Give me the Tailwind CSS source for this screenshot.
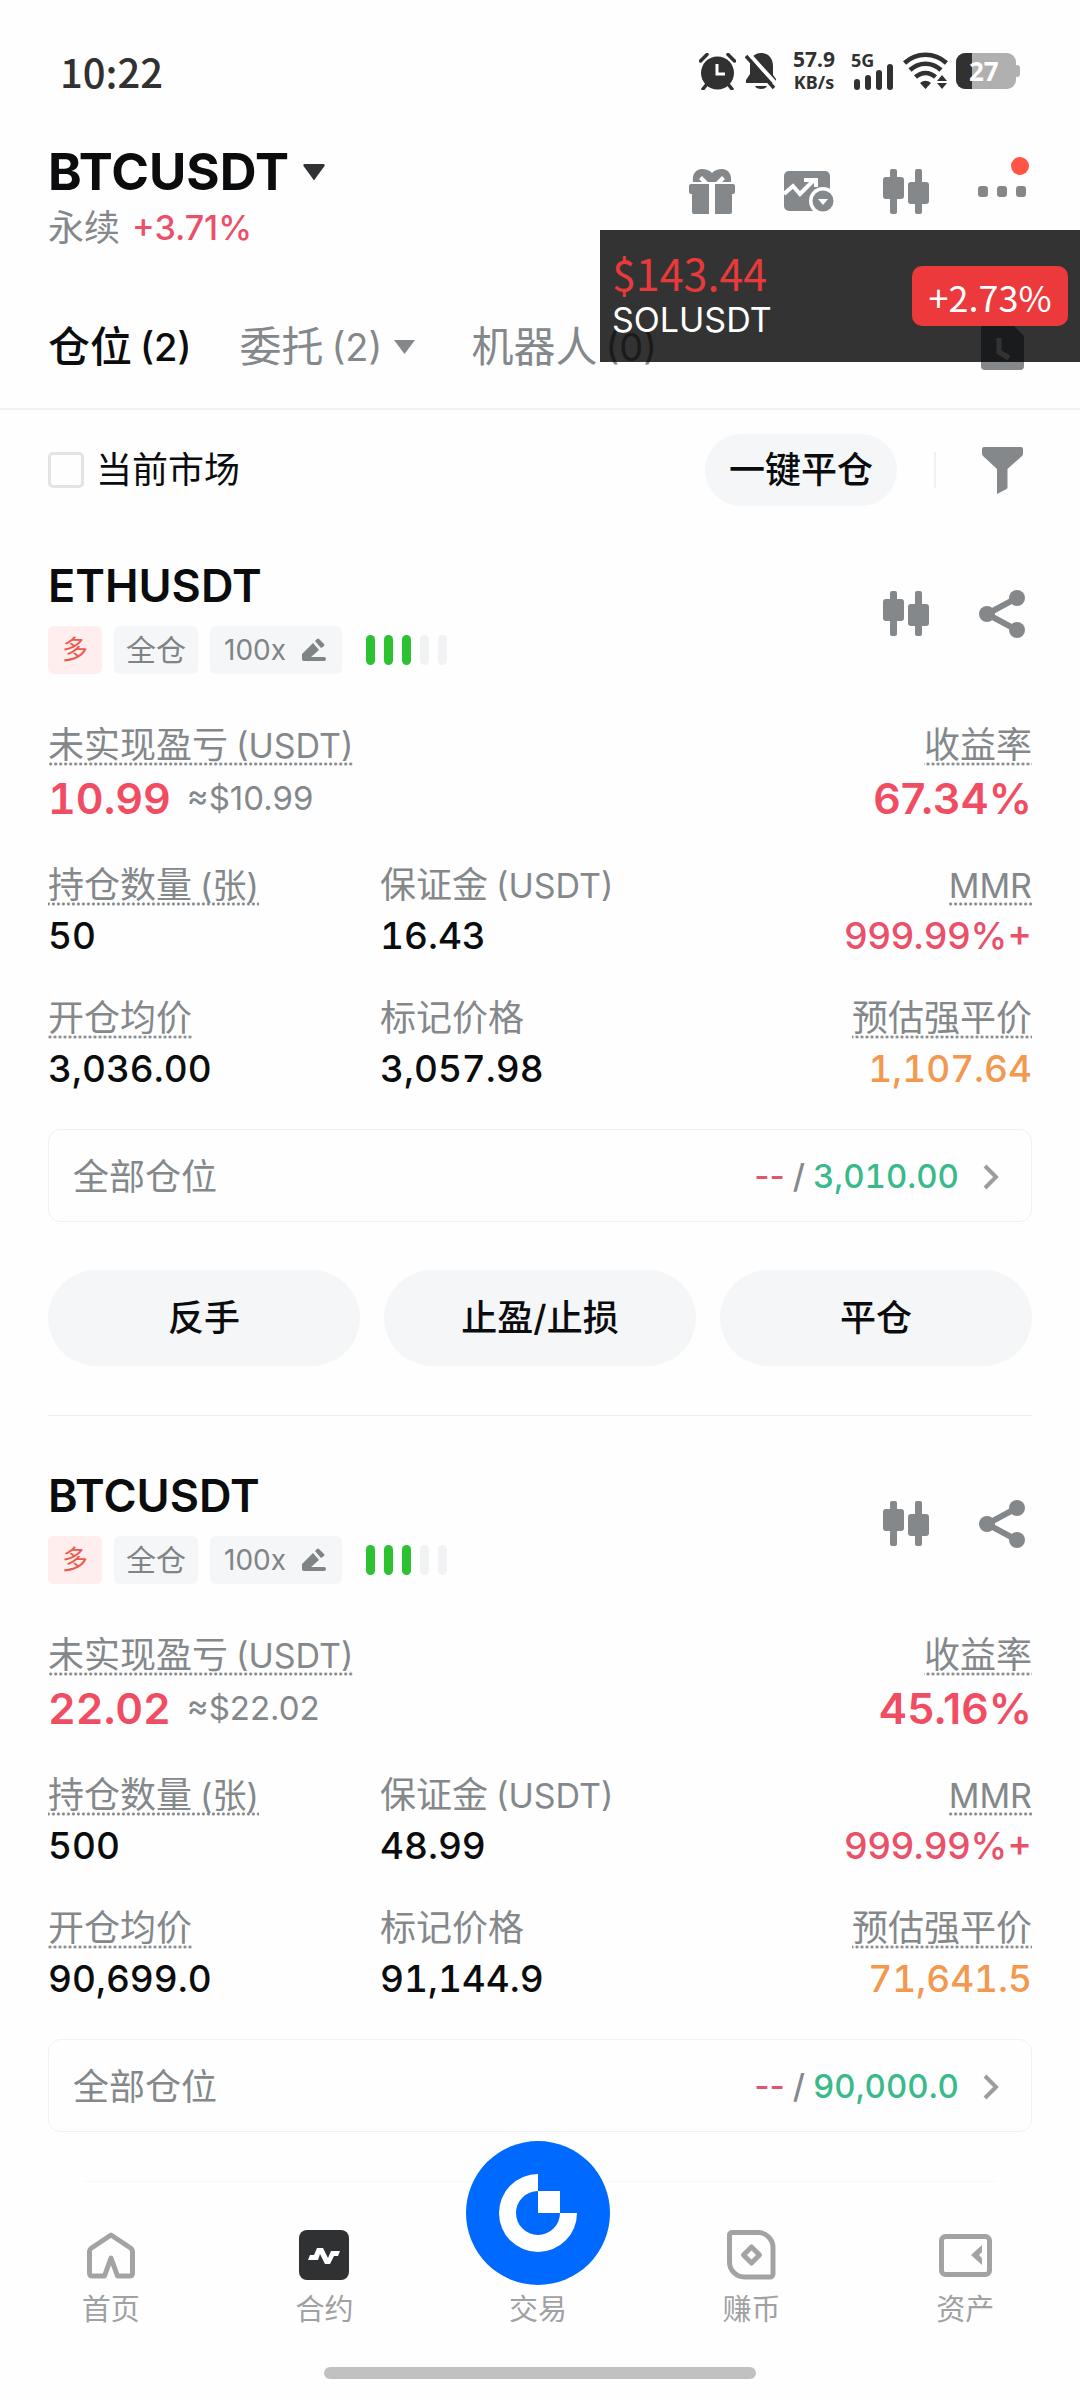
<!DOCTYPE html>
<html lang="zh-CN">
<head>
<meta charset="utf-8">
<meta name="viewport" content="width=device-width, initial-scale=1">
<title>BTCUSDT 永续</title>
<script src="https://cdn.jsdelivr.net/npm/@tailwindcss/browser@4"></script>
</head>
<body class="bg-[#fefefe] font-[Inter,'Noto_Sans_CJK_SC',sans-serif] text-[#0b0c0d]">
<svg class="hidden" aria-hidden="true">
  <symbol id="candles" viewBox="0 0 46 46"><g fill="#84888b"><rect x="7" y="0" width="7" height="45" rx="2"/><rect x="0" y="8" width="21" height="22" rx="3"/><rect x="32" y="0" width="7" height="45" rx="2"/><rect x="25" y="13" width="21" height="22" rx="3"/></g></symbol>
  <symbol id="share" viewBox="0 0 46 48"><path d="M38 8 8 24l30 16" fill="none" stroke="#84888b" stroke-width="6"/><g fill="#84888b"><circle cx="38" cy="8" r="8"/><circle cx="8" cy="24" r="8"/><circle cx="38" cy="40" r="8"/></g></symbol>
  <symbol id="pencil" viewBox="0 0 24 24"><g fill="#7f8487"><path d="M0 21v-5L11 5l6 7-8 7h13a1.500 1.500 0 0 1 0 4H2a2 2 0 0 1-2-2z"/><path d="m13 3 2-2a1.500 1.500 0 0 1 2 0l5 5a1.500 1.500 0 0 1 0 2l-3 2z"/></g></symbol>
  <symbol id="chevron" viewBox="0 0 16 26"><path d="m2 2 11 11L2 24" fill="none" stroke="#9b9da0" stroke-width="4"/></symbol>
</svg>

<div class="relative flex min-h-screen flex-col">

  <!-- Status bar -->
  <div class="flex h-[142px] items-center justify-between pr-[60px] pl-[60px] text-[#313131]">
    <time class="font-['Noto_Sans_CJK_SC',sans-serif] text-[40px] leading-[48px] font-medium">10:22</time>
    <div class="flex items-center font-['Noto_Sans','Noto_Sans_CJK_SC',sans-serif] font-bold">
      <svg class="h-[37px] w-[37px]" viewBox="0 0 37 37" aria-label="闹钟"><circle cx="18.500" cy="20" r="16.500" fill="#313131"/><path d="M1.500 8 8 1.500M35.500 8 29 1.500M8 31l-4 5M29 31l4 5" stroke="#313131" stroke-width="3.500" stroke-linecap="round"/><path d="M18 11v10h8" fill="none" stroke="#fff" stroke-width="3"/></svg>
      <svg class="ml-2 h-[38px] w-[33px]" viewBox="0 0 33 38" aria-label="静音"><path d="M17 1c8 0 12 6 12 13v9l3 4v4H2v-3l4-6v-9C6 6 10 1 17 1z" fill="#313131"/><path d="M11 34h12c-1 2-3 3-6 3s-5-1-6-3z" fill="#313131"/><path d="M4 1 33 33" stroke="#fff" stroke-width="4"/><path d="m2 4 28 32" stroke="#313131" stroke-width="3.500"/></svg>
      <div class="ml-4 flex flex-col items-center leading-[23px]"><span class="text-[21px]">57.9</span><span class="text-[18px]">KB/s</span></div>
      <div class="relative ml-4 h-[38px] w-[44px]"><span class="absolute top-0 left-0 text-[18px] leading-4">5G</span>
        <svg class="h-full w-full" viewBox="0 0 44 38"><g fill="#313131"><rect x="3" y="27" width="6" height="11" rx="3"/><rect x="14" y="23" width="6" height="15" rx="3"/><rect x="25" y="18" width="6" height="20" rx="3"/><rect x="36" y="12" width="6" height="26" rx="3"/></g></svg></div>
      <svg class="ml-2 h-[38px] w-[45px]" viewBox="0 0 45 38" aria-label="Wi-Fi"><g fill="none" stroke="#313131" stroke-width="4.500"><path d="M1.500 11c12-11 30-11 42 0"/><path d="M7 18c9-8.500 22-8.500 31 0"/><path d="M12.500 25c6-5.500 14-5.500 20 0"/></g><path d="M17 31c4-3 7-3 11 0l-5.500 6z" fill="#313131"/><path d="m34 29 5-6 5 6zM34 31h10l-5 6z" fill="#313131"/></svg>
      <div class="relative ml-2 h-[36px] w-[64px]"><svg class="h-full w-full" viewBox="0 0 64 36"><rect x="58" y="12" width="6" height="12" rx="3" fill="#b0b0b0"/><rect width="60" height="36" rx="9" fill="#b0b0b0"/><path d="M9 0h7v36H9a9 9 0 0 1-9-9V9a9 9 0 0 1 9-9z" fill="#313131"/></svg><span class="absolute inset-0 flex items-center pl-[13px] text-[26px] text-white">27</span></div>
    </div>
  </div>

  <!-- Instrument header -->
  <header class="flex h-[112px] justify-between px-12">
    <div class="pt-0.5">
      <h1><button class="flex items-center gap-[14px] text-[51px] leading-[56px] font-bold">BTCUSDT
        <svg class="h-4 w-[22px]" viewBox="0 0 22 16"><path d="M1.500 0h19c1 0 1.500 1 1 2L12 15a1 1 0 0 1-2 0L.500 2C0 1 .500 0 1.500 0z" fill="#303235"/></svg></button></h1>
      <p class="flex items-center gap-3 text-[36px] leading-[56px] text-[#84888b]">永续<span class="text-[34px] font-medium text-[#ea5068]">+3.71%</span></p>
    </div>
    <div class="flex h-[100px] items-center gap-[49px]">
      <button aria-label="礼物"><svg class="block h-[46px] w-[46px]" viewBox="0 0 46 46"><g fill="#84888b"><path d="M2 15h18v30H5a2 2 0 0 1-2-2V25H2a2 2 0 0 1-2-2v-6a2 2 0 0 1 2-2zM26 15h18a2 2 0 0 1 2 2v6a2 2 0 0 1-2 2h-1v18a2 2 0 0 1-2 2H26z"/><path d="M4 13C3 5 7 0 13 0c4 0 7 1 10 4 3-3 6-4 10-4 6 0 10 5 9 13h-9l3-3-3-3-6 6h-8l-6-6-3 3 3 3z"/></g></svg></button>
      <button aria-label="行情"><svg class="block h-[44px] w-[50px]" viewBox="0 0 50 44"><rect y="1" width="46" height="40" rx="5" fill="#84888b"/><path d="m0 24 9-8 7 8L29 11M20 10h12v7" fill="none" stroke="#fff" stroke-width="4"/><circle cx="39" cy="31" r="14" fill="#fff"/><circle cx="39" cy="31" r="10.500" fill="#84888b"/><path d="M34 29h10l-5 6z" fill="#fff"/></svg></button>
      <button aria-label="K线"><svg class="block h-[46px] w-[46px]"><use href="#candles"/></svg></button>
      <button class="relative mr-[6px]" aria-label="更多"><svg class="block h-[46px] w-12" viewBox="0 0 48 46"><g fill="#84888b"><rect y="17" width="10" height="11" rx="3"/><rect x="19" y="17" width="10" height="11" rx="3"/><rect x="38" y="17" width="10" height="11" rx="3"/></g></svg><span class="absolute -top-3 -right-[3px] h-[18px] w-[18px] rounded-full bg-[#ff5546]"></span></button>
    </div>
  </header>

  <!-- Tabs -->
  <div class="flex h-[156px] items-center justify-between border-b-2 border-[#f1f1f1] pt-8 pr-14 pl-12 text-[42px] leading-[56px] text-[#84888b]">
    <div class="flex items-center">
      <button class="flex items-center gap-2 font-medium text-[#0b0c0d]">仓位<span class="text-[38px]">(2)</span></button>
      <button class="ml-12 flex items-center gap-2">委托<span class="text-[38px]">(2)</span><svg class="ml-1 h-[14px] w-[21px]" viewBox="0 0 21 14"><path d="M0 0h21L10.500 14z" fill="#84888b"/></svg></button>
      <button class="ml-14 flex items-center gap-2">机器人<span class="text-[38px]">(0)</span></button>
    </div>
    <button aria-label="历史"><svg class="block h-[46px] w-[43px]" viewBox="0 0 43 46"><path d="M4 0h27l12 12v30a4 4 0 0 1-4 4H4a4 4 0 0 1-4-4V4a4 4 0 0 1 4-4z" fill="#84888b"/><path d="M18 14v14l10 6" fill="none" stroke="#fff" stroke-width="5"/></svg></button>
  </div>

  <!-- Price ticker floating above the page -->
  <aside class="absolute top-[230px] right-0 z-10 flex h-[132px] w-[480px] items-center justify-between bg-black/80 pr-3 pl-3">
    <div><p class="font-['Noto_Sans_CJK_SC',sans-serif] text-[43px] leading-[48px] text-[#e8393b]">$143.44</p><p class="text-[34px] leading-[48px] text-white">SOLUSDT</p></div>
    <span class="flex h-[60px] w-[156px] items-center justify-center rounded-[10px] bg-[#eb393c] font-['Noto_Sans_CJK_SC',sans-serif] text-[36px] text-white">+2.73%</span>
  </aside>

  <main class="px-12">
    <div class="flex items-center justify-between pt-6 pr-[9px]">
      <label class="flex items-center gap-3 text-[36px]"><input type="checkbox" class="h-9 w-9 appearance-none rounded-[5px] border-3 border-[#e2e3e3]">当前市场</label>
      <div class="flex items-center">
        <button class="h-[72px] rounded-full bg-[#f4f6f8] px-6 text-[36px] font-medium">一键平仓</button>
        <span class="mr-[46px] ml-[37px] h-9 w-[2px] bg-[#f0f1f1]"></span>
        <button aria-label="筛选"><svg class="block h-[47px] w-[41px]" viewBox="0 0 41 47"><path d="M2 0h37a2 2 0 0 1 2 2v5a3 3 0 0 1-1 2L25.500 22v18a2 2 0 0 1-1 2L15 47V22L1 9a3 3 0 0 1-1-2V2a2 2 0 0 1 2-2z" fill="#84888b"/></svg></button>
      </div>
    </div>

    <!-- ETHUSDT position -->
    <section class="border-b border-[#ececec] pt-[52px] pb-[49px]">
      <div class="flex justify-between">
        <div>
          <h2 class="text-[45px] leading-[56px] font-semibold">ETHUSDT</h2>
          <div class="mt-3 flex items-center gap-3 leading-[48px] text-[#7f8487]">
            <span class="rounded-md bg-[#ffeeed] px-[14px] text-[26px] text-[#ec5a4d]">多</span>
            <span class="rounded-md bg-[#f4f6f8] px-3 text-[30px]">全仓</span>
            <button class="flex items-center gap-4 rounded-md bg-[#f4f6f8] pr-4 pl-[14px] text-[28px]">100x<svg class="h-6 w-6"><use href="#pencil"/></svg></button>
            <div class="ml-3 flex gap-[9px]"><i class="h-[30px] w-[9px] rounded-full bg-[#2dc232]"></i><i class="h-[30px] w-[9px] rounded-full bg-[#2dc232]"></i><i class="h-[30px] w-[9px] rounded-full bg-[#2dc232]"></i><i class="h-[30px] w-[9px] rounded-full bg-[#f1f2f3]"></i><i class="h-[30px] w-[9px] rounded-full bg-[#f1f2f3]"></i></div>
          </div>
        </div>
        <div class="flex h-[112px] items-center gap-[50px] pr-[7px]">
          <button aria-label="K线"><svg class="block h-[46px] w-[46px]"><use href="#candles"/></svg></button>
          <button aria-label="分享"><svg class="block h-12 w-[46px]"><use href="#share"/></svg></button>
        </div>
      </div>
      <dl class="mt-12 flex justify-between text-[36px] text-[#84888b]">
        <div>
          <dt class="flex h-11 w-fit items-center gap-2 bg-[radial-gradient(circle,#84888b_1px,transparent_2px)] bg-[length:5px_4px] bg-bottom bg-repeat-x pt-0.5">未实现盈亏<span class="text-[34px]">(USDT)</span></dt>
          <dd class="mt-2 flex items-center gap-4 text-[43px] leading-[48px] font-semibold text-[#f04d63] tabular-nums">10.99<span class="text-[33px] font-normal text-[#84888b] proportional-nums">≈$10.99</span></dd>
        </div>
        <div class="flex flex-col items-end">
          <dt class="flex h-11 items-center bg-[radial-gradient(circle,#84888b_1px,transparent_2px)] bg-[length:5px_4px] bg-bottom bg-repeat-x pt-0.5">收益率</dt>
          <dd class="mt-2 text-[43px] leading-[48px] font-semibold text-[#f04d63]">67.34%</dd>
        </div>
      </dl>
      <dl class="mt-10 grid grid-cols-3 gap-x-3 gap-y-[37px] text-[36px] text-[#84888b]">
        <div>
          <dt class="flex h-11 w-fit items-center gap-2 bg-[radial-gradient(circle,#84888b_1px,transparent_2px)] bg-[length:5px_4px] bg-bottom bg-repeat-x pt-0.5">持仓数量<span class="text-[34px]">(张)</span></dt>
          <dd class="mt-2 text-[37px] leading-[44px] font-medium text-[#0b0c0d] tabular-nums">50</dd>
        </div>
        <div>
          <dt class="flex h-11 items-center gap-2 pt-0.5">保证金<span class="text-[34px]">(USDT)</span></dt>
          <dd class="mt-2 text-[37px] leading-[44px] font-medium text-[#0b0c0d] tabular-nums">16.43</dd>
        </div>
        <div class="flex flex-col items-end">
          <dt class="flex h-11 items-center bg-[radial-gradient(circle,#84888b_1px,transparent_2px)] bg-[length:5px_4px] bg-bottom bg-repeat-x pt-0.5 text-[34px]">MMR</dt>
          <dd class="mt-2 text-[37px] leading-[44px] font-medium text-[#ea5068]">999.99%+</dd>
        </div>
        <div>
          <dt class="flex h-11 w-fit items-center bg-[radial-gradient(circle,#84888b_1px,transparent_2px)] bg-[length:5px_4px] bg-bottom bg-repeat-x pt-0.5">开仓均价</dt>
          <dd class="mt-2 text-[37px] leading-[44px] font-medium text-[#0b0c0d] tabular-nums">3,036.00</dd>
        </div>
        <div>
          <dt class="flex h-11 items-center pt-0.5">标记价格</dt>
          <dd class="mt-2 text-[37px] leading-[44px] font-medium text-[#0b0c0d] tabular-nums">3,057.98</dd>
        </div>
        <div class="flex flex-col items-end">
          <dt class="flex h-11 items-center bg-[radial-gradient(circle,#84888b_1px,transparent_2px)] bg-[length:5px_4px] bg-bottom bg-repeat-x pt-0.5">预估强平价</dt>
          <dd class="mt-2 text-[37px] leading-[44px] font-medium text-[#f2984f] tabular-nums">1,107.64</dd>
        </div>
      </dl>
      <a href="#" class="mt-[38px] flex h-[93px] items-center rounded-xl border border-[#f0f1f1] px-6 pt-0.5 text-[36px] text-[#84888b]">全部仓位
        <span class="ml-auto flex gap-2 text-[33px] font-medium"><span class="text-[#e0566c]">--</span><span>/</span><span class="text-[#3ab98a] tabular-nums">3,010.00</span></span>
        <svg class="mr-2 ml-6 h-[26px] w-4"><use href="#chevron"/></svg></a>
      <div class="mt-12 grid grid-cols-3 gap-6 text-[36px] font-medium">
        <button class="h-24 rounded-full bg-[#f4f6f8]">反手</button>
        <button class="h-24 rounded-full bg-[#f4f6f8]">止盈/止损</button>
        <button class="h-24 rounded-full bg-[#f4f6f8]">平仓</button>
      </div>
    </section>

    <!-- BTCUSDT position -->
    <section class="pt-[52px] pb-[49px]">
      <div class="flex justify-between">
        <div>
          <h2 class="text-[45px] leading-[56px] font-semibold">BTCUSDT</h2>
          <div class="mt-3 flex items-center gap-3 leading-[48px] text-[#7f8487]">
            <span class="rounded-md bg-[#ffeeed] px-[14px] text-[26px] text-[#ec5a4d]">多</span>
            <span class="rounded-md bg-[#f4f6f8] px-3 text-[30px]">全仓</span>
            <button class="flex items-center gap-4 rounded-md bg-[#f4f6f8] pr-4 pl-[14px] text-[28px]">100x<svg class="h-6 w-6"><use href="#pencil"/></svg></button>
            <div class="ml-3 flex gap-[9px]"><i class="h-[30px] w-[9px] rounded-full bg-[#2dc232]"></i><i class="h-[30px] w-[9px] rounded-full bg-[#2dc232]"></i><i class="h-[30px] w-[9px] rounded-full bg-[#2dc232]"></i><i class="h-[30px] w-[9px] rounded-full bg-[#f1f2f3]"></i><i class="h-[30px] w-[9px] rounded-full bg-[#f1f2f3]"></i></div>
          </div>
        </div>
        <div class="flex h-[112px] items-center gap-[50px] pr-[7px]">
          <button aria-label="K线"><svg class="block h-[46px] w-[46px]"><use href="#candles"/></svg></button>
          <button aria-label="分享"><svg class="block h-12 w-[46px]"><use href="#share"/></svg></button>
        </div>
      </div>
      <dl class="mt-12 flex justify-between text-[36px] text-[#84888b]">
        <div>
          <dt class="flex h-11 w-fit items-center gap-2 bg-[radial-gradient(circle,#84888b_1px,transparent_2px)] bg-[length:5px_4px] bg-bottom bg-repeat-x pt-0.5">未实现盈亏<span class="text-[34px]">(USDT)</span></dt>
          <dd class="mt-2 flex items-center gap-4 text-[43px] leading-[48px] font-semibold text-[#f04d63] tabular-nums">22.02<span class="text-[33px] font-normal text-[#84888b] proportional-nums">≈$22.02</span></dd>
        </div>
        <div class="flex flex-col items-end">
          <dt class="flex h-11 items-center bg-[radial-gradient(circle,#84888b_1px,transparent_2px)] bg-[length:5px_4px] bg-bottom bg-repeat-x pt-0.5">收益率</dt>
          <dd class="mt-2 text-[43px] leading-[48px] font-semibold text-[#f04d63]">45.16%</dd>
        </div>
      </dl>
      <dl class="mt-10 grid grid-cols-3 gap-x-3 gap-y-[37px] text-[36px] text-[#84888b]">
        <div>
          <dt class="flex h-11 w-fit items-center gap-2 bg-[radial-gradient(circle,#84888b_1px,transparent_2px)] bg-[length:5px_4px] bg-bottom bg-repeat-x pt-0.5">持仓数量<span class="text-[34px]">(张)</span></dt>
          <dd class="mt-2 text-[37px] leading-[44px] font-medium text-[#0b0c0d] tabular-nums">500</dd>
        </div>
        <div>
          <dt class="flex h-11 items-center gap-2 pt-0.5">保证金<span class="text-[34px]">(USDT)</span></dt>
          <dd class="mt-2 text-[37px] leading-[44px] font-medium text-[#0b0c0d] tabular-nums">48.99</dd>
        </div>
        <div class="flex flex-col items-end">
          <dt class="flex h-11 items-center bg-[radial-gradient(circle,#84888b_1px,transparent_2px)] bg-[length:5px_4px] bg-bottom bg-repeat-x pt-0.5 text-[34px]">MMR</dt>
          <dd class="mt-2 text-[37px] leading-[44px] font-medium text-[#ea5068]">999.99%+</dd>
        </div>
        <div>
          <dt class="flex h-11 w-fit items-center bg-[radial-gradient(circle,#84888b_1px,transparent_2px)] bg-[length:5px_4px] bg-bottom bg-repeat-x pt-0.5">开仓均价</dt>
          <dd class="mt-2 text-[37px] leading-[44px] font-medium text-[#0b0c0d] tabular-nums">90,699.0</dd>
        </div>
        <div>
          <dt class="flex h-11 items-center pt-0.5">标记价格</dt>
          <dd class="mt-2 text-[37px] leading-[44px] font-medium text-[#0b0c0d] tabular-nums">91,144.9</dd>
        </div>
        <div class="flex flex-col items-end">
          <dt class="flex h-11 items-center bg-[radial-gradient(circle,#84888b_1px,transparent_2px)] bg-[length:5px_4px] bg-bottom bg-repeat-x pt-0.5">预估强平价</dt>
          <dd class="mt-2 text-[37px] leading-[44px] font-medium text-[#f2984f] tabular-nums">71,641.5</dd>
        </div>
      </dl>
      <a href="#" class="mt-[38px] flex h-[93px] items-center rounded-xl border border-[#f0f1f1] px-6 pt-0.5 text-[36px] text-[#84888b]">全部仓位
        <span class="ml-auto flex gap-2 text-[33px] font-medium"><span class="text-[#e0566c]">--</span><span>/</span><span class="text-[#3ab98a] tabular-nums">90,000.0</span></span>
        <svg class="mr-2 ml-6 h-[26px] w-4"><use href="#chevron"/></svg></a>
    </section>
  </main>

  <!-- Bottom navigation -->
  <footer class="mt-auto">
    <div class="mx-[84px] h-px bg-[#f7f7f7]"></div>
    <nav class="grid grid-cols-5 items-end pt-[47px] pr-2 pl-1 text-[29px] leading-9 text-[#9fa1a3]">
      <a href="#" class="flex flex-col items-center gap-3"><svg class="h-[50px] w-12" viewBox="0 0 48 50"><path d="M24 5 4.500 18c-1.500 1-2 2-2 3v22c0 2 1 3 3 3h12l6.500-18 6.500 18h12c2 0 3-1 3-3V21c0-1-.5-2-2-3z" fill="none" stroke="#a1a3a5" stroke-width="5" stroke-linejoin="round"/></svg>首页</a>
      <a href="#" class="flex flex-col items-center gap-3" aria-current="page"><svg class="h-[50px] w-[50px]" viewBox="0 0 50 50"><rect width="50" height="50" rx="8" fill="#303133"/><path d="m9 30 2-5h4l3-7h6l5 10 3-7h9l-2 5h-4l-4 8h-5l-5-10-2 6z" fill="#fff"/></svg>合约</a>
      <a href="#" class="-mt-22 flex flex-col items-center gap-[7px]"><svg class="h-36 w-36" viewBox="0 0 144 144"><circle cx="72" cy="72" r="72" fill="#0069ff"/><path d="M72 33a39 39 0 1 0 39 39H94a22 22 0 1 1-22-22zM72 50h22v22H72z" fill="#fff"/></svg>交易</a>
      <a href="#" class="flex flex-col items-center gap-3"><svg class="h-[50px] w-[49px]" viewBox="0 0 49 50"><path d="M5 2.500h26a15 15 0 0 1 15 15V44a3 3 0 0 1-3 3H18A15 15 0 0 1 2.500 32V5A2.500 2.500 0 0 1 5 2.500z" fill="none" stroke="#a1a3a5" stroke-width="5"/><path d="m24.500 17 8 8-8 8-8-8z" fill="none" stroke="#a1a3a5" stroke-width="5" stroke-linejoin="round"/></svg>赚币</a>
      <a href="#" class="flex flex-col items-center gap-3"><svg class="h-[50px] w-[53px]" viewBox="0 0 53 50"><rect x="2.500" y="6.500" width="48" height="38" rx="4" fill="none" stroke="#a1a3a5" stroke-width="5"/><path d="M43 15v7l-3 3 3 3v7L32 25z" fill="#a1a3a5"/></svg>资产</a>
    </nav>
    <div class="mx-auto mt-[39px] mb-[21px] h-3 w-2/5 rounded-full bg-[#c1c1c1]"></div>
  </footer>
</div>
</body>
</html>
